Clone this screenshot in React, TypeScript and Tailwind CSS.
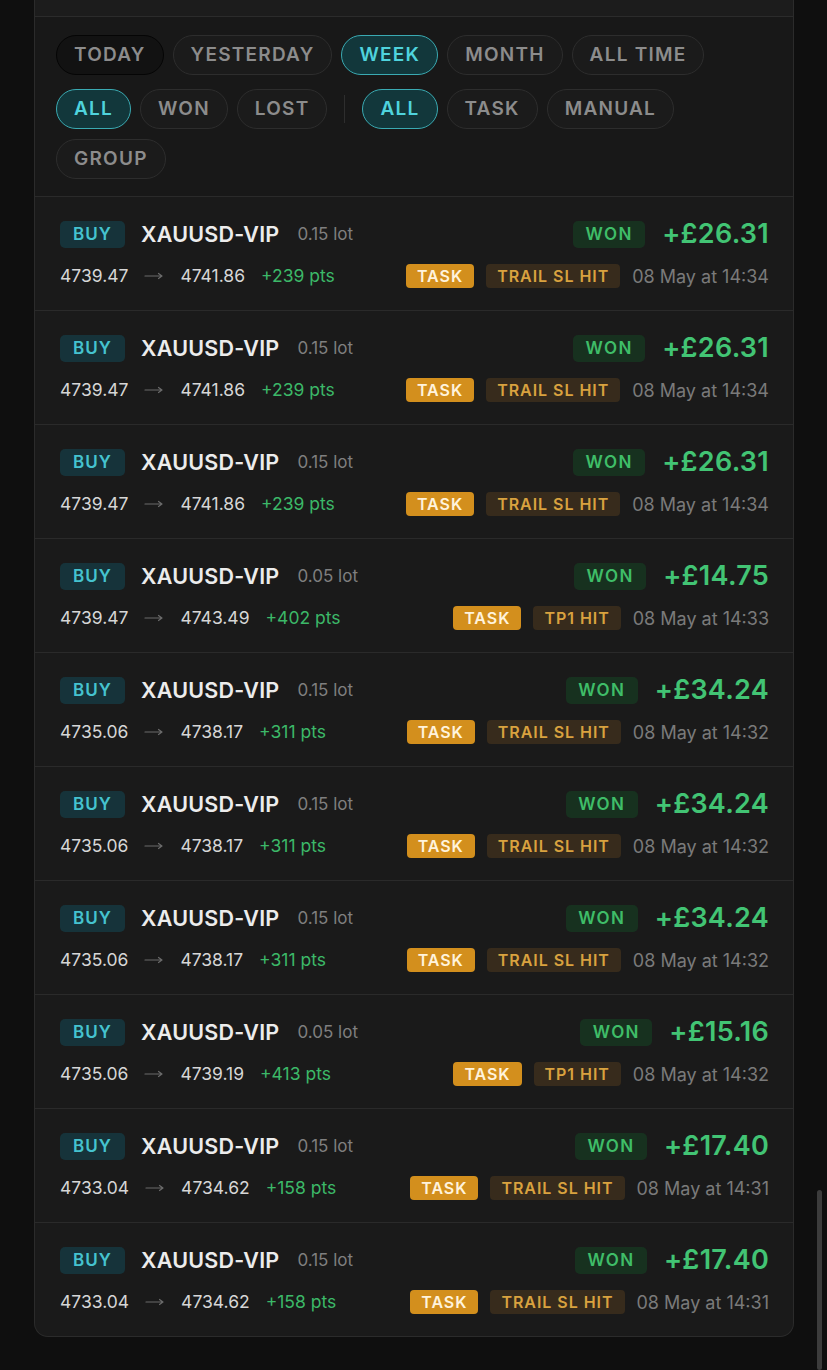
import React from 'react'

const trades = [
  { entry: '4739.47', exit: '4741.86', pts: '+239 pts', lot: '0.15 lot', reason: 'TRAIL SL HIT', time: '14:34', pnl: '+£26.31' },
  { entry: '4739.47', exit: '4741.86', pts: '+239 pts', lot: '0.15 lot', reason: 'TRAIL SL HIT', time: '14:34', pnl: '+£26.31' },
  { entry: '4739.47', exit: '4741.86', pts: '+239 pts', lot: '0.15 lot', reason: 'TRAIL SL HIT', time: '14:34', pnl: '+£26.31' },
  { entry: '4739.47', exit: '4743.49', pts: '+402 pts', lot: '0.05 lot', reason: 'TP1 HIT', time: '14:33', pnl: '+£14.75' },
  { entry: '4735.06', exit: '4738.17', pts: '+311 pts', lot: '0.15 lot', reason: 'TRAIL SL HIT', time: '14:32', pnl: '+£34.24' },
  { entry: '4735.06', exit: '4738.17', pts: '+311 pts', lot: '0.15 lot', reason: 'TRAIL SL HIT', time: '14:32', pnl: '+£34.24' },
  { entry: '4735.06', exit: '4738.17', pts: '+311 pts', lot: '0.15 lot', reason: 'TRAIL SL HIT', time: '14:32', pnl: '+£34.24' },
  { entry: '4735.06', exit: '4739.19', pts: '+413 pts', lot: '0.05 lot', reason: 'TP1 HIT', time: '14:32', pnl: '+£15.16' },
  { entry: '4733.04', exit: '4734.62', pts: '+158 pts', lot: '0.15 lot', reason: 'TRAIL SL HIT', time: '14:31', pnl: '+£17.40' },
  { entry: '4733.04', exit: '4734.62', pts: '+158 pts', lot: '0.15 lot', reason: 'TRAIL SL HIT', time: '14:31', pnl: '+£17.40' },
]

type ChipState = 'idle' | 'active' | 'focus'

function Chip({ label, state = 'idle' }: { label: string; state?: ChipState }) {
  const cls =
    state === 'active'
      ? 'bg-[#12373b] border-[#3aaab2] text-[#4fd3dd]'
      : state === 'focus'
      ? 'bg-[#121212] border-[#050505] text-[#8c8c8c]'
      : 'bg-[#1b1b1b] border-[#2d2d2d] text-[#8c8c8c]'
  return (
    <div className={`h-10 px-[17px] flex items-center rounded-full border-[1.5px] text-[19px] font-semibold tracking-[0.065em] ${cls}`}>
      {label}
    </div>
  )
}

// thin long arrow between entry and exit price
function Arrow() {
  return (
    <svg width="20" height="10" viewBox="0 0 20 10" className="shrink-0">
      <path d="M1 5h17M14.5 2.5L18 5l-3.5 2.5" fill="none" stroke="#6a6a6a" strokeWidth="1.2" strokeLinecap="round" strokeLinejoin="round" />
    </svg>
  )
}

function TradeRow({ t }: { t: typeof trades[number] }) {
  return (
    <div className="border-t border-[#2a2a2a] pl-[25px] pr-[24px] pt-[24px] pb-[22px] flex flex-col gap-[16px]">
      {/* line 1 */}
      <div className="flex items-center justify-between h-[27px]">
        <div className="flex items-center">
          <span className="h-[27px] w-[65px] flex items-center justify-center rounded-[5px] bg-[#16333a] text-[#45c3cf] text-[17px] font-semibold tracking-[0.06em]">
            BUY
          </span>
          <span className="ml-[16px] text-[21.5px] font-semibold text-[#ececec] tracking-[0.01em]">XAUUSD-VIP</span>
          <span className="ml-[18px] text-[17px] text-[#7f7f7f]">{t.lot}</span>
        </div>
        <div className="flex items-center">
          <span className="h-[27px] w-[72px] flex items-center justify-center rounded-[5px] bg-[#17311f] text-[#3fbd68] text-[17px] font-semibold tracking-[0.08em]">
            WON
          </span>
          <span className="ml-[17px] text-[27px] font-semibold text-[#42c474] tracking-[0.01em]">{t.pnl}</span>
        </div>
      </div>
      {/* line 2 */}
      <div className="flex items-center justify-between h-[24px]">
        <div className="flex items-center gap-[16px] text-[17.5px]">
          <span className="text-[#d6d6d6]">{t.entry}</span>
          <Arrow />
          <span className="text-[#d6d6d6]">{t.exit}</span>
          <span className="text-[#3cb868]">{t.pts}</span>
        </div>
        <div className="flex items-center gap-[12px]">
          <span className="h-[24px] px-[11px] flex items-center rounded-[4px] bg-[#d38f1d] text-[#fff3dc] text-[16px] font-semibold tracking-[0.06em]">
            TASK
          </span>
          <span className="h-[24px] px-[11px] flex items-center rounded-[4px] bg-[#372b1c] text-[#d9a23f] text-[16px] font-semibold tracking-[0.06em]">
            {t.reason}
          </span>
          <span className="text-[18px] text-[#7a7a7a]">08 May at {t.time}</span>
        </div>
      </div>
    </div>
  )
}

export default function App() {
  return (
    <div className="relative min-h-[1370px] bg-[#0f0f0f] pl-[34px] pr-[33px] pb-[32px]" style={{ fontFamily: 'Inter, "Noto Sans", sans-serif' }}>
      <div className="bg-[#1a1a1a] border-x border-b border-[#2b2b2b] rounded-b-[14px] overflow-hidden">
        <div className="h-[17px] border-b border-[#2b2b2b] bg-[#1c1c1c]" />

        {/* Filters */}
        <div className="pl-[21px] pr-[20px] pt-[18px] pb-[17px] bg-[#181818]">
          <div className="flex flex-wrap gap-[9px]">
            <Chip label="TODAY" state="focus" />
            <Chip label="YESTERDAY" />
            <Chip label="WEEK" state="active" />
            <Chip label="MONTH" />
            <Chip label="ALL TIME" />
          </div>
          <div className="mt-[14px] flex flex-wrap items-center gap-x-[9px] gap-y-[10px]">
            <Chip label="ALL" state="active" />
            <Chip label="WON" />
            <Chip label="LOST" />
            <div className="w-px h-7 bg-[#2e2e2e] mx-[8px]" />
            <Chip label="ALL" state="active" />
            <Chip label="TASK" />
            <Chip label="MANUAL" />
            <Chip label="GROUP" />
          </div>
        </div>

        {trades.map((t, i) => (
          <TradeRow key={i} t={t} />
        ))}
      </div>

      {/* scrollbar */}
      <div className="absolute right-[5px] top-[1190px] w-[5px] h-[180px] rounded-full bg-[#3c3c3c]" />
    </div>
  )
}
